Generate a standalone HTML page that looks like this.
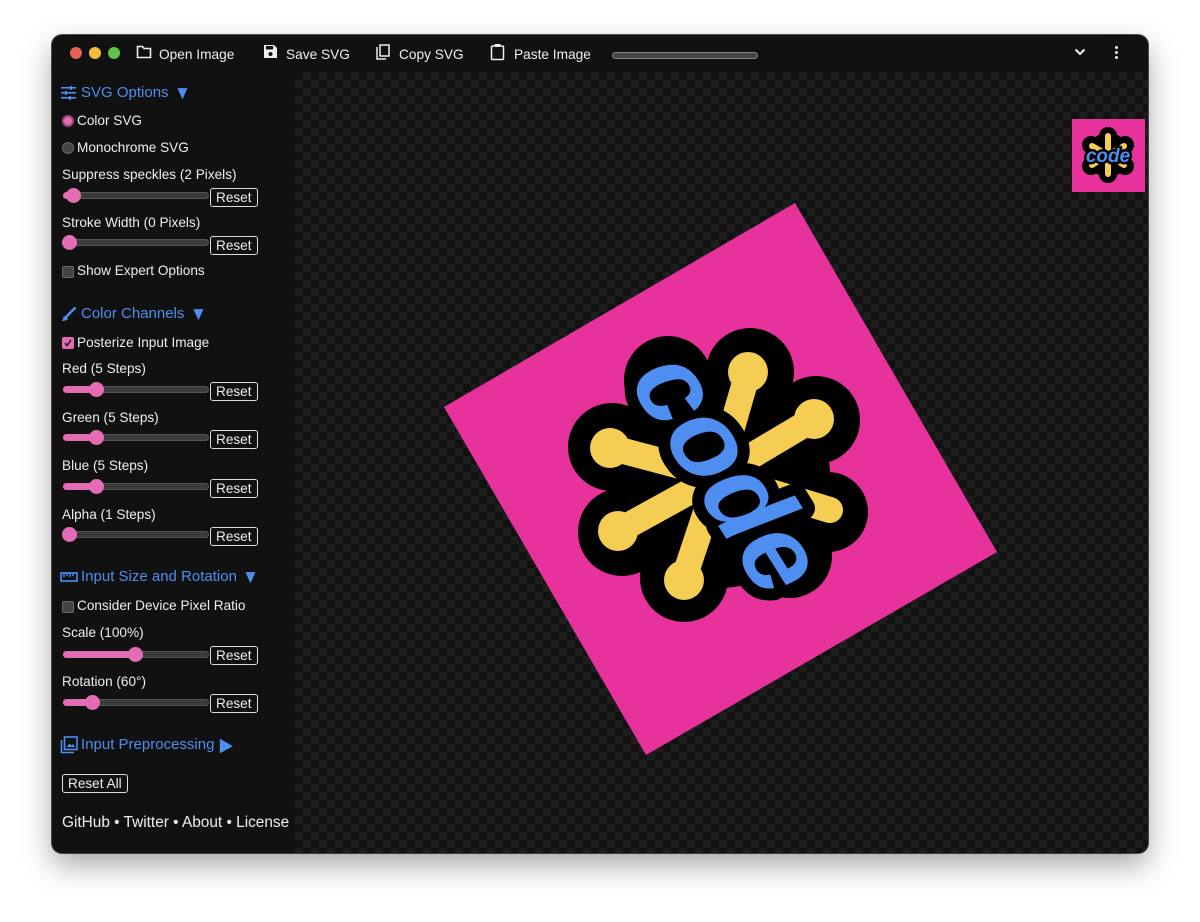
<!DOCTYPE html>
<html><head><meta charset="utf-8"><style>
*{margin:0;padding:0;box-sizing:border-box}
body{width:1200px;height:922px;background:#fff;font-family:"Liberation Sans",sans-serif;position:relative;overflow:hidden}
#win{position:absolute;left:52px;top:35px;width:1096px;height:818px;background:#111;border-radius:10px;overflow:hidden;box-shadow:0 12px 30px rgba(0,0,0,.35),0 0 0 1px #555}
.a{position:absolute}
.t{position:absolute;color:#eee;font-size:13.6px;white-space:nowrap;line-height:16px}
.tb{position:absolute;color:#eee;font-size:13.7px;white-space:nowrap;top:12px}
.h{position:absolute;color:#4d8ef0;font-size:15px;white-space:nowrap;line-height:18px}
.h b{font-size:19px;font-weight:normal;display:inline-block;transform:scaleX(.9);vertical-align:-2px}
.btn{position:absolute;border:1px solid #ddd;border-radius:3px;color:#eee;font-size:13.6px;line-height:17px;padding:0 5px;background:#111}
.track{position:absolute;height:7px;width:146px;border-radius:4px;background:#3a3a3a;border:1px solid #555}
.fill{position:absolute;height:7px;border-radius:4px;background:#e46cb4}
.thumb{position:absolute;width:15px;height:15px;border-radius:50%;background:#e46cb4}
.cb{position:absolute;width:12px;height:12px;border-radius:2px;background:#444;border:1px solid #666}
#canvas{position:absolute;left:243px;top:37px;width:853px;height:781px;
background-color:#111;background-image:linear-gradient(45deg,#1d1d1d 25%,transparent 25%,transparent 75%,#1d1d1d 75%),linear-gradient(45deg,#1d1d1d 25%,transparent 25%,transparent 75%,#1d1d1d 75%);background-size:16px 16px;background-position:0 0,8px 8px}
</style></head><body>
<div id="win">
<div class="a" style="left:18px;top:12px;width:12px;height:12px;border-radius:50%;background:#ec5f57"></div>
<div class="a" style="left:37px;top:12px;width:12px;height:12px;border-radius:50%;background:#f4be3b"></div>
<div class="a" style="left:56px;top:12px;width:12px;height:12px;border-radius:50%;background:#5fc449"></div>
<svg class="a" style="left:84px;top:10px" width="16" height="14" viewBox="0 0 16 14"><path d="M1.5 1.5h5l1.5 2h6.5v9h-13z" fill="none" stroke="#eee" stroke-width="1.6"/></svg>
<div class="tb" style="left:107px">Open Image</div>
<svg class="a" style="left:211px;top:9px" width="15" height="15" viewBox="0 0 15 15"><path d="M1 1h10l3 3v10H1z" fill="#eee"/><rect x="3" y="2" width="7" height="3.5" fill="#111"/><circle cx="7.5" cy="10" r="2" fill="#111"/></svg>
<div class="tb" style="left:234px">Save SVG</div>
<svg class="a" style="left:323px;top:9px" width="16" height="17" viewBox="0 0 16 17"><path d="M2 3v12h9" fill="none" stroke="#eee" stroke-width="1.5"/><rect x="5" y="1" width="9" height="11" fill="none" stroke="#eee" stroke-width="1.5"/></svg>
<div class="tb" style="left:347px">Copy SVG</div>
<svg class="a" style="left:438px;top:8px" width="15" height="18" viewBox="0 0 15 18"><rect x="1.5" y="3" width="12" height="13.5" rx="1" fill="none" stroke="#eee" stroke-width="1.5"/><rect x="4.5" y="1" width="6" height="3" fill="#eee"/></svg>
<div class="tb" style="left:462px">Paste Image</div>
<div class="a" style="left:560px;top:17px;width:146px;height:7px;border-radius:4px;background:#444;border:1px solid #888"></div>
<svg class="a" style="left:1022px;top:13px" width="12" height="8" viewBox="0 0 12 8"><path d="M1.5 1.5l4.5 4.5 4.5-4.5" fill="none" stroke="#eee" stroke-width="2"/></svg>
<div class="a" style="left:1063px;top:11px;width:3px;height:3px;background:#eee;border-radius:50%;box-shadow:0 5px 0 #eee,0 10px 0 #eee"></div>

<svg class="a" style="left:9px;top:51px" width="15" height="14" viewBox="0 0 15 14" fill="#4d8ef0"><rect x="0" y="1" width="15" height="1.6"/><rect x="0" y="6" width="15" height="1.6"/><rect x="0" y="11" width="15" height="1.6"/><rect x="9" y="0" width="1.8" height="4"/><rect x="4" y="5" width="1.8" height="4"/><rect x="8" y="10" width="1.8" height="4"/></svg>
<div class="h" style="left:29px;top:49px">SVG Options <b>▼</b></div>
<div class="a" style="left:10px;top:80px;width:12px;height:12px;border-radius:50%;background:#e46cb4;border:2px solid #9a4a7a"></div>
<div class="t" style="left:25px;top:78px">Color SVG</div>
<div class="a" style="left:10px;top:107px;width:12px;height:12px;border-radius:50%;background:#444;border:1px solid #666"></div>
<div class="t" style="left:25px;top:105px">Monochrome SVG</div>
<div class="t" style="left:10px;top:132px">Suppress speckles (2 Pixels)</div>
<div class="track" style="left:11px;top:157px"></div><div class="fill" style="left:11px;top:157px;width:12px"></div><div class="thumb" style="left:14px;top:153px"></div>
<div class="btn" style="left:158px;top:153px">Reset</div>
<div class="t" style="left:10px;top:180px">Stroke Width (0 Pixels)</div>
<div class="track" style="left:11px;top:204px"></div><div class="thumb" style="left:10px;top:200px"></div>
<div class="btn" style="left:158px;top:201px">Reset</div>
<div class="cb" style="left:10px;top:231px"></div>
<div class="t" style="left:25px;top:228px">Show Expert Options</div>

<svg class="a" style="left:9px;top:272px" width="15" height="15" viewBox="0 0 15 15"><path d="M14 1L6 9" stroke="#4d8ef0" stroke-width="2.5" stroke-linecap="round"/><path d="M5 9c-2 0-3 1-3 3l-1 2c3 0 6-1 6-3z" fill="#4d8ef0"/></svg>
<div class="h" style="left:29px;top:270px">Color Channels <b>▼</b></div>
<div class="cb" style="left:10px;top:302px;background:#e46cb4;border-color:#e46cb4"></div>
<svg class="a" style="left:11px;top:303px" width="10" height="10" viewBox="0 0 10 10"><path d="M2 5l2 2.5 4-5.5" fill="none" stroke="#222" stroke-width="1.6"/></svg>
<div class="t" style="left:25px;top:300px">Posterize Input Image</div>
<div class="t" style="left:10px;top:326px">Red (5 Steps)</div>
<div class="track" style="left:11px;top:351px"></div><div class="fill" style="left:11px;top:351px;width:36px"></div><div class="thumb" style="left:37px;top:347px"></div>
<div class="btn" style="left:158px;top:347px">Reset</div>
<div class="t" style="left:10px;top:375px">Green (5 Steps)</div>
<div class="track" style="left:11px;top:399px"></div><div class="fill" style="left:11px;top:399px;width:36px"></div><div class="thumb" style="left:37px;top:395px"></div>
<div class="btn" style="left:158px;top:395px">Reset</div>
<div class="t" style="left:10px;top:423px">Blue (5 Steps)</div>
<div class="track" style="left:11px;top:448px"></div><div class="fill" style="left:11px;top:448px;width:36px"></div><div class="thumb" style="left:37px;top:444px"></div>
<div class="btn" style="left:158px;top:444px">Reset</div>
<div class="t" style="left:10px;top:472px">Alpha (1 Steps)</div>
<div class="track" style="left:11px;top:496px"></div><div class="thumb" style="left:10px;top:492px"></div>
<div class="btn" style="left:158px;top:492px">Reset</div>

<svg class="a" style="left:8px;top:537px" width="18" height="10" viewBox="0 0 18 10"><rect x="1" y="1" width="16" height="8" fill="none" stroke="#4d8ef0" stroke-width="1.6"/><path d="M4 1v4M7 1v3M10 1v4M13 1v3" stroke="#4d8ef0" stroke-width="1.4"/></svg>
<div class="h" style="left:29px;top:533px">Input Size and Rotation <b>▼</b></div>
<div class="cb" style="left:10px;top:566px"></div>
<div class="t" style="left:25px;top:563px">Consider Device Pixel Ratio</div>
<div class="t" style="left:10px;top:590px">Scale (100%)</div>
<div class="track" style="left:11px;top:616px"></div><div class="fill" style="left:11px;top:616px;width:76px"></div><div class="thumb" style="left:76px;top:612px"></div>
<div class="btn" style="left:158px;top:611px">Reset</div>
<div class="t" style="left:10px;top:639px">Rotation (60°)</div>
<div class="track" style="left:11px;top:664px"></div><div class="fill" style="left:11px;top:664px;width:32px"></div><div class="thumb" style="left:33px;top:660px"></div>
<div class="btn" style="left:158px;top:659px">Reset</div>

<svg class="a" style="left:8px;top:701px" width="18" height="18" viewBox="0 0 18 18"><path d="M1.5 4v12.5H14" fill="none" stroke="#4d8ef0" stroke-width="1.6"/><rect x="4.5" y="1" width="12.5" height="12.5" fill="none" stroke="#4d8ef0" stroke-width="1.6"/><path d="M6.5 11l3-3.5 2 2 1.5-1.5 2 3z" fill="#4d8ef0"/></svg>
<div class="h" style="left:29px;top:701px">Input Preprocessing <b>▶</b></div>
<div class="btn" style="left:10px;top:739px">Reset All</div>
<div class="t" style="left:10px;top:779px;font-size:15.4px;line-height:17px">GitHub • Twitter • About • License</div>

<div id="canvas">
<svg width="853" height="781" viewBox="295 72 853 781" style="position:absolute;left:0;top:0">
<polygon points="795,203 997,552 646,755 444,407" fill="#e8329b"/>
<g fill="#000">
<circle cx="718" cy="476" r="112"/>
<circle cx="750" cy="372" r="44"/><circle cx="816" cy="420" r="44"/><circle cx="828" cy="512" r="40"/>
<circle cx="612" cy="447" r="44"/><circle cx="622" cy="532" r="44"/><circle cx="684" cy="578" r="44"/>
<circle cx="668" cy="380" r="44"/><circle cx="790" cy="556" r="42"/>
</g>
<g stroke="#f5cd52" stroke-width="26" stroke-linecap="round" fill="#f5cd52">
<line x1="718" y1="476" x2="748" y2="372"/><line x1="718" y1="476" x2="812" y2="420"/>
<line x1="718" y1="476" x2="612" y2="448"/><line x1="718" y1="476" x2="620" y2="530"/>
<line x1="718" y1="476" x2="684" y2="578"/><line x1="718" y1="476" x2="830" y2="510"/>
<circle cx="748" cy="372" r="20" stroke="none"/><circle cx="814" cy="419" r="20" stroke="none"/><circle cx="610" cy="448" r="20" stroke="none"/><circle cx="618" cy="531" r="20" stroke="none"/><circle cx="684" cy="580" r="20" stroke="none"/>
</g>
<text x="0" y="0" transform="translate(722,476) rotate(58)" text-anchor="middle" dominant-baseline="middle" font-family="Liberation Sans" font-style="italic" font-weight="bold" font-size="112" fill="#4d8ef0" stroke="#000" stroke-width="24" stroke-linejoin="round" paint-order="stroke">code</text>
<rect x="1072" y="119" width="73" height="73" fill="#e8329b"/>
<g fill="#000"><circle cx="1108" cy="155" r="22"/><circle cx="1108" cy="136" r="9"/><circle cx="1108" cy="174" r="9"/><circle cx="1091" cy="145" r="9"/><circle cx="1125" cy="145" r="9"/><circle cx="1091" cy="166" r="9"/><circle cx="1125" cy="166" r="9"/></g>
<g stroke="#f5cd52" stroke-width="6" stroke-linecap="round"><line x1="1108" y1="155" x2="1108" y2="136"/><line x1="1108" y1="155" x2="1108" y2="174"/><line x1="1108" y1="155" x2="1092" y2="146"/><line x1="1108" y1="155" x2="1124" y2="146"/><line x1="1108" y1="155" x2="1092" y2="165"/><line x1="1108" y1="155" x2="1124" y2="165"/></g>
<text x="1108" y="162" text-anchor="middle" font-family="Liberation Sans" font-style="italic" font-weight="bold" font-size="19" fill="#4d8ef0" stroke="#000" stroke-width="5" stroke-linejoin="round" paint-order="stroke">code</text>
</svg>
</div>
</div>
</body></html>
